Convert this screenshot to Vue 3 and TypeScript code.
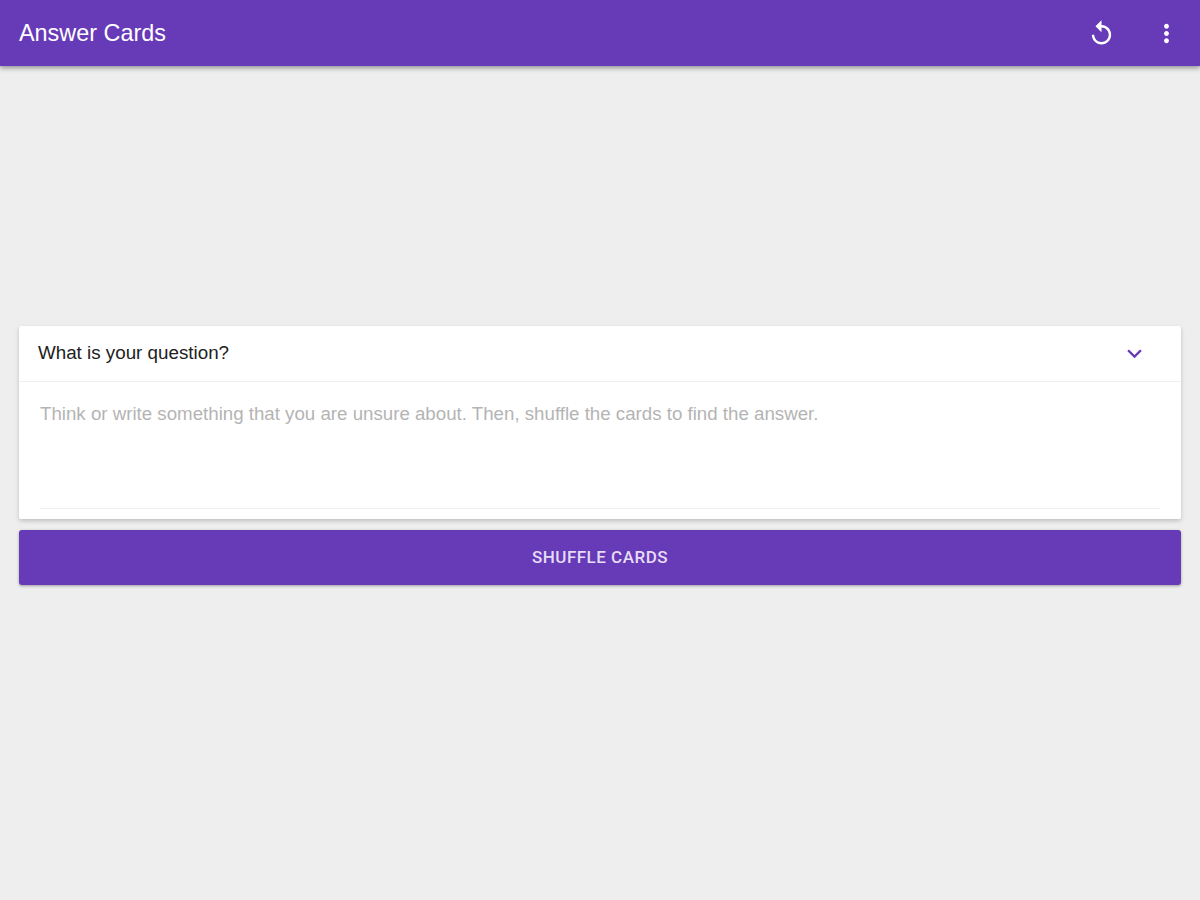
<script setup lang="ts">
const title: string = 'Answer Cards'
const question: string = 'What is your question?'
const placeholder: string = 'Think or write something that you are unsure about. Then, shuffle the cards to find the answer.'
</script>

<template>
  <div class="page">
    <header class="toolbar">
      <span class="title">{{ title }}</span>
      <div class="actions">
        <svg class="icon" viewBox="0 0 24 24" width="29" height="29" fill="#fff"><path d="M12 5V1L7 6l5 5V7c3.31 0 6 2.69 6 6s-2.69 6-6 6-6-2.69-6-6H4c0 4.42 3.58 8 8 8s8-3.58 8-8-3.58-8-8-8z"/></svg>
        <svg class="icon" viewBox="0 0 24 24" width="29" height="29" fill="#fff"><path d="M12 8c1.1 0 2-.9 2-2s-.9-2-2-2-2 .9-2 2 .9 2 2 2zm0 2c-1.1 0-2 .9-2 2s.9 2 2 2 2-.9 2-2-.9-2-2-2zm0 6c-1.1 0-2 .9-2 2s.9 2 2 2 2-.9 2-2-.9-2-2-2z"/></svg>
      </div>
    </header>
    <main class="content">
      <section class="card">
        <div class="card-head">
          <span class="question">{{ question }}</span>
          <svg class="chevron" viewBox="0 0 24 24" width="29" height="29" fill="#673ab7"><path d="M7.41 8.59 12 13.17l4.59-4.58L18 10l-6 6-6-6z"/></svg>
        </div>
        <div class="card-body">
          <p class="hint">{{ placeholder }}</p>
          <div class="rule"></div>
        </div>
      </section>
      <button class="shuffle" type="button">SHUFFLE CARDS</button>
    </main>
  </div>
</template>

<style>
html, body { margin: 0; background: #eeeeee; }
</style>

<style scoped>
.page {
  height: 900px;
  background: #eeeeee;
  font-family: "Liberation Sans", Roboto, sans-serif;
  overflow: hidden;
}
.toolbar {
  height: 66px;
  box-sizing: border-box;
  padding: 0 19px;
  background: #673ab7;
  display: flex;
  align-items: center;
  justify-content: space-between;
  box-shadow: 0 2px 5px rgba(0, 0, 0, 0.4);
}
.title {
  color: #fff;
  font-size: 23.4px;
}
.actions {
  display: flex;
  align-items: center;
  gap: 36px;
}
.content {
  padding: 260px 19px 0;
}
.card {
  background: #fff;
  border-radius: 2px;
  box-shadow: 0 2px 4px rgba(0, 0, 0, 0.2);
}
.card-head {
  height: 56px;
  box-sizing: border-box;
  padding: 0 32px 0 19px;
  border-bottom: 1px solid #eeeeee;
  display: flex;
  align-items: center;
  justify-content: space-between;
}
.question {
  font-size: 18.8px;
  color: #212121;
  margin-top: -1px;
}
.card-body {
  height: 137px;
  box-sizing: border-box;
  padding: 21px 21px 0;
  display: flex;
  flex-direction: column;
}
.hint {
  margin: 0;
  font-size: 18.7px;
  line-height: 21px;
  color: #b4b4b4;
}
.rule {
  margin-top: 84px;
  height: 1px;
  background: #eeeeee;
}
.shuffle {
  display: block;
  width: 100%;
  height: 55px;
  margin-top: 11px;
  padding: 0 0 2px;
  border: 0;
  border-radius: 3px;
  background: #673ab7;
  color: #e6dcf5;
  font-family: Roboto, "Liberation Sans", sans-serif;
  font-size: 17px;
  font-weight: 500;
  letter-spacing: 0.5px;
  box-shadow: 0 1px 3px rgba(0, 0, 0, 0.35);
}
</style>
